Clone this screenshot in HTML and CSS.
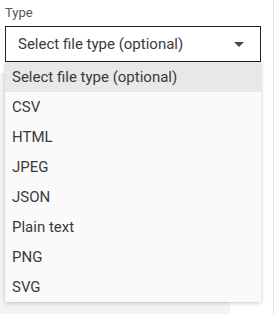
FILE: index.html
```html
<!DOCTYPE html>
<html>
<head>
<meta charset="utf-8">
<link rel="stylesheet" href="styles.css">
</head>
<body>
<div class="page">
  <div class="field">
    <label class="label">Type</label>
    <div class="select">
      <span class="select-text">Select file type (optional)</span>
      <svg class="arrow" width="10" height="5" viewBox="0 0 10 5"><path d="M0 0H10L5 5Z" fill="#4a4a4a"/></svg>
    </div>
  </div>
  <div class="backdrop"></div>
  <ul class="menu">
    <li class="item active">Select file type (optional)</li>
    <li class="item">CSV</li>
    <li class="item">HTML</li>
    <li class="item">JPEG</li>
    <li class="item">JSON</li>
    <li class="item">Plain text</li>
    <li class="item">PNG</li>
    <li class="item">SVG</li>
  </ul>
</div>
</body>
</html>
```
FILE: styles.css
```css
html, body {
  margin: 0;
  padding: 0;
  background: #fff;
}
body {
  font-family: Roboto, "Noto Sans", sans-serif;
  color: #333;
}
.page {
  position: relative;
  width: 273px;
  height: 314px;
  border-right: 1px solid #e4e4e4;
  display: flex;
  flex-direction: column;
  overflow: hidden;
}
.field {
  padding: 5px 12px 0 5px;
  display: flex;
  flex-direction: column;
}
.label {
  font-size: 13px;
  line-height: 16px;
  color: #555;
  margin-bottom: 5px;
}
.select {
  box-sizing: border-box;
  height: 36px;
  border: 1px solid #222;
  display: flex;
  align-items: center;
  justify-content: space-between;
  padding: 0 16px 0 12px;
}
.select-text {
  font-size: 15px;
  color: #3a3a3a;
}
.arrow {
  display: block;
}
.backdrop {
  margin-top: 11px;
  width: 230px;
  flex: 1;
  background: #f2f3f5;
}
.menu {
  position: absolute;
  top: 62px;
  left: 5px;
  width: 256px;
  margin: 0;
  padding: 0;
  list-style: none;
  background: #fafafa;
  box-shadow: 0 1px 4px rgba(0,0,0,0.22);
}
.item {
  height: 30px;
  line-height: 30px;
  padding-left: 7px;
  font-size: 15px;
  color: #3a3a3a;
}
.item.active {
  background: #e8e8e8;
}
```
